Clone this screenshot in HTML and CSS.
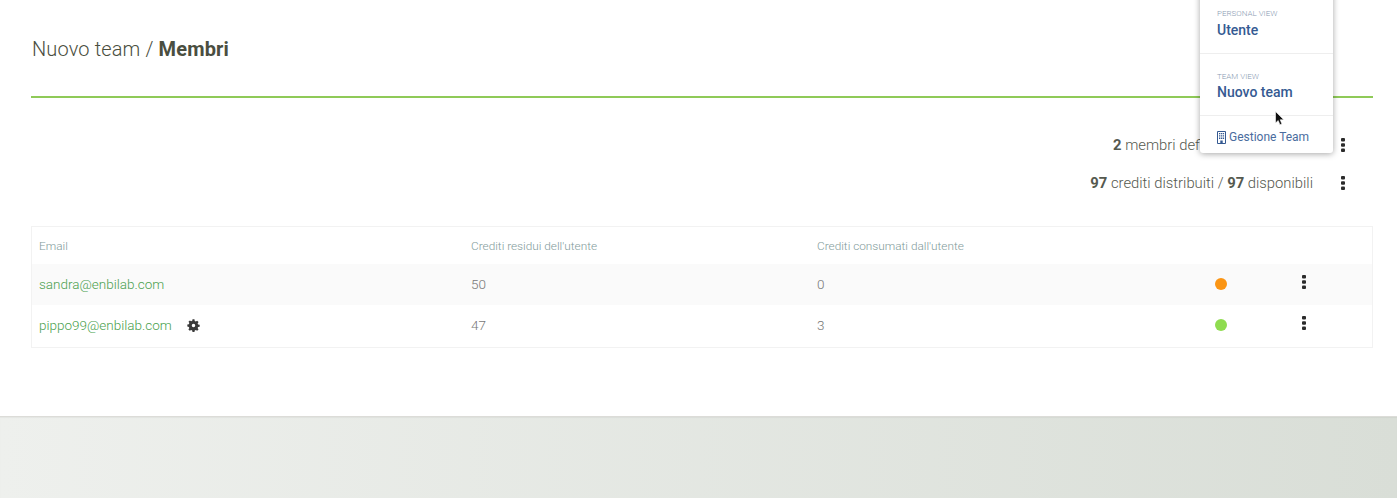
FILE: index.html
```html
<!DOCTYPE html>
<html lang="it">
<head>
<meta charset="utf-8">
<title>Nuovo team / Membri</title>
<link rel="stylesheet" href="styles.css">
</head>
<body>
<main class="page">
  <h1 class="title">Nuovo team / <b>Membri</b></h1>
  <section class="summary">
    <div class="summary-row">
      <span><b>2</b> membri definiti / <b>5</b> disponibili</span>
      <svg class="kebab" viewBox="0 0 4 14" width="4" height="14"><rect y="0" width="4" height="3.6" rx="1"/><rect y="5.2" width="4" height="3.6" rx="1"/><rect y="10.4" width="4" height="3.6" rx="1"/></svg>
    </div>
    <div class="summary-row">
      <span><b>97</b> crediti distribuiti / <b>97</b> disponibili</span>
      <svg class="kebab" viewBox="0 0 4 14" width="4" height="14"><rect y="0" width="4" height="3.6" rx="1"/><rect y="5.2" width="4" height="3.6" rx="1"/><rect y="10.4" width="4" height="3.6" rx="1"/></svg>
    </div>
  </section>
  <section class="table">
    <div class="row head">
      <span>Email</span>
      <span>Crediti residui dell'utente</span>
      <span>Crediti consumati dall'utente</span>
    </div>
    <div class="row odd">
      <span class="email">sandra@enbilab.com</span>
      <span>50</span>
      <span>0</span>
      <span class="dot orange"></span>
      <svg class="kebab" viewBox="0 0 4 14" width="4" height="14"><rect y="0" width="4" height="3.6" rx="1"/><rect y="5.2" width="4" height="3.6" rx="1"/><rect y="10.4" width="4" height="3.6" rx="1"/></svg>
    </div>
    <div class="row">
      <span class="email">pippo99@enbilab.com
        <svg class="gear" viewBox="0 0 24 24" width="13" height="13"><path fill-rule="evenodd" d="M13.8 1l.5 2.9c.7.2 1.4.5 2 .9l2.4-1.7 2.6 2.6-1.7 2.400c.4.6.7 1.3.9 2l2.9.5v3.700l-2.900.5c-.2.7-.5 1.400-.9 2l1.700 2.400-2.600 2.600-2.400-1.700c-.6.400-1.300.7-2 .9l-.5 2.900h-3.700l-.5-2.900c-.7-.2-1.400-.5-2-.9l-2.400 1.700-2.600-2.600 1.700-2.400c-.4-.6-.7-1.300-.9-2L.6 13.800v-3.700l2.900-.5c.2-.7.5-1.400.9-2L2.700 5.200l2.600-2.600 2.400 1.700c.6-.4 1.300-.7 2-.9l.5-2.900h3.600zM12 8.800a3.200 3.200 0 1 0 0 6.400 3.200 3.200 0 0 0 0-6.400z"/></svg>
      </span>
      <span>47</span>
      <span>3</span>
      <span class="dot green"></span>
      <svg class="kebab" viewBox="0 0 4 14" width="4" height="14"><rect y="0" width="4" height="3.6" rx="1"/><rect y="5.2" width="4" height="3.6" rx="1"/><rect y="10.4" width="4" height="3.6" rx="1"/></svg>
    </div>
  </section>
</main>
<footer class="footer"></footer>
<nav class="menu">
  <div class="menu-item">
    <small>PERSONAL VIEW</small>
    <strong>Utente</strong>
  </div>
  <div class="menu-item">
    <small>TEAM VIEW</small>
    <strong>Nuovo team</strong>
  </div>
  <div class="menu-link">
    <svg class="building" viewBox="0 0 9 13" width="9" height="13"><path fill="none" stroke="currentColor" d="M.5.5h8v12h-8z"/><path fill="currentColor" d="M2 2h1.300v1.300H2zM3.900 2h1.300v1.300H3.900zM5.800 2h1.300v1.300H5.800zM2 4.300h1.300v1.300H2zM3.900 4.300h1.300v1.300H3.900zM5.800 4.300h1.300v1.300H5.800zM2 6.600h1.300v1.300H2zM3.900 6.600h1.300v1.300H3.900zM5.800 6.600h1.300v1.300H5.800zM3.300 9.500h2.400v3H3.300z"/></svg>
    <span>Gestione Team</span>
  </div>
</nav>
<svg class="cursor" viewBox="0 0 10 15" width="10" height="15"><path d="M.5.5v11.500l2.700-2.500 1.700 4.200 2-.8-1.700-4.100h3.600z" fill="#111" stroke="#fff" stroke-width=".6"/></svg>
</body>
</html>
```
FILE: styles.css
```css
* { box-sizing: border-box; }
html, body { margin: 0; padding: 0; }
body {
  width: 1397px;
  height: 498px;
  overflow: hidden;
  background: #fff;
  font-family: Roboto, "Liberation Sans", sans-serif;
  font-weight: 300;
  color: #4a4f42;
  position: relative;
}
b { font-weight: 700; }
.page {
  height: 416px;
  padding: 0 24px 0 31px;
}
.title {
  margin: 0;
  height: 98px;
  padding: 37px 0 0 1px;
  border-bottom: 2px solid #8fca58;
  font-size: 20px;
  line-height: 24px;
  font-weight: 300;
  letter-spacing: .14px;
  color: #4a4e40;
}
.title b { font-weight: 700; }
.summary {
  height: 128px;
  padding-top: 28px;
}
.summary-row {
  display: flex;
  justify-content: flex-end;
  align-items: center;
  height: 38px;
  font-size: 14.8px;
  color: #55594f;
}
.summary-row .kebab { margin: 0 28px 0 28px; }
.kebab { fill: #2b2b2b; display: block; }
.table {
  border: 1px solid #f2f2f2;
  height: 122px;
}
.row {
  display: grid;
  grid-template-columns: 432px 346px 398px 87px 4px;
  align-items: center;
  height: 41px;
  padding: 0 0 2px 7px;
  font-size: 13.5px;
  color: #777;
}
.row .kebab { margin-bottom: 4px; }
.row.head {
  height: 37px;
  padding-bottom: 0;
  font-size: 11.8px;
  color: #7f9a9a;
}
.row.odd { background: #fafafa; }
.email { color: #4a9f4e; }
.gear { fill: #3a3a3a; margin-left: 12px; vertical-align: -2px; }
.dot {
  display: block;
  width: 12px;
  height: 12px;
  border-radius: 50%;
}
.orange { background: #fb9514; }
.green { background: #8fdc50; }
.footer {
  height: 82px;
  border-top: 1px solid #dcdcd8;
  box-shadow: inset 0 1px 1px rgba(0,0,0,.04);
  background: linear-gradient(90deg, #eef0ed 0%, #d9ded7 100%);
}
.menu {
  position: absolute;
  left: 1200px;
  top: -10px;
  width: 133px;
  height: 163px;
  background: #fff;
  border-radius: 0 0 3px 3px;
  box-shadow: 0 1px 6px rgba(0,0,0,.35);
  color: #355a92;
}
.menu-item {
  height: 62px;
  padding: 18px 17px 0;
  border-bottom: 1px solid #eee;
}
.menu-item:first-child { height: 64px; padding-top: 19px; }
.menu-item small {
  display: block;
  font-size: 8px;
  line-height: 10px;
  color: #8a9bb3;
}
.menu-item strong {
  display: block;
  margin-top: 2px;
  font-size: 14px;
  line-height: 16px;
  font-weight: 500;
}
.menu-item:first-child strong { margin-top: 3px; }
.menu-link {
  display: flex;
  align-items: center;
  gap: 3px;
  padding: 13px 0 0 17px;
  font-size: 12px;
  font-weight: 300;
  line-height: 16px;
}
.menu-link span { font-weight: 400; color: #4a6c9e; }
.cursor {
  position: absolute;
  left: 1275px;
  top: 111px;
}
```
